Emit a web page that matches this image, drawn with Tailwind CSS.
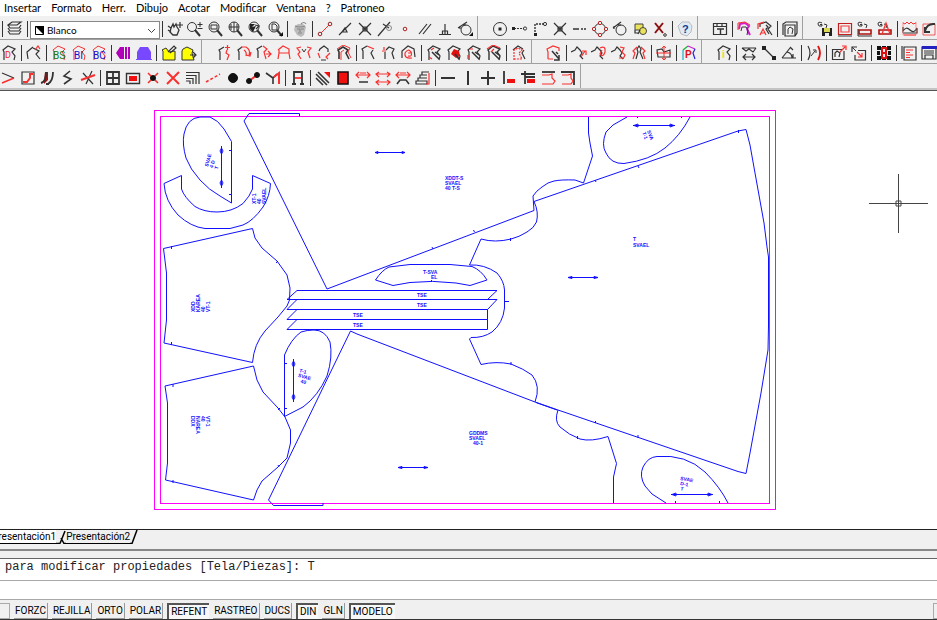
<!DOCTYPE html>
<html lang="es">

<head>
	<meta charset="UTF-8" />
	<meta name="viewport" content="width=device-width, initial-scale=1.0" />
	<title>Patroneo</title>
	<script src="https://cdn.jsdelivr.net/npm/@tailwindcss/browser@4"></script>
</head>

<body class="h-screen flex flex-col overflow-hidden bg-[#f0f0f0] text-black font-['Liberation_Sans',sans-serif]">
	<nav class="h-4 shrink-0 bg-white flex items-center gap-[10px] pl-1 text-[11px] leading-4 font-['Lato',sans-serif]">
		<button>Insertar</button>
		<button>Formato</button>
		<button>Herr.</button>
		<button>Dibujo</button>
		<button>Acotar</button>
		<button>Modificar</button>
		<button>Ventana</button>
		<button>?</button>
		<button>Patroneo</button>
	</nav>

	<header class="shrink-0 border-b border-[#555]">
		<div id="row-1" class="h-6 flex overflow-hidden">
			<div class="flex items-end shrink-0 border-b border-r border-[#a0a0a0] pr-[2px]">
				<div class="flex items-end" data-icons="| layers |"></div>
				<div class="h-[18px] w-[130px] flex items-center bg-white border border-[#888] pl-1">
					<svg class="w-[9px] h-[9px] shrink-0" viewBox="0 0 9 9" aria-hidden="true">
						<path d="M.5.5h8v8h-8z" fill="#fff" stroke="#000" />
						<path d="M0 0h9v9z" />
					</svg>
					<select aria-label="Color" class="flex-1 min-w-0 appearance-none outline-none pl-[3px] text-[10px] leading-4 font-['Lato',sans-serif]">
						<option>Blanco</option>
					</select>
					<svg class="w-[9px] h-[9px] mr-[3px] shrink-0" viewBox="0 0 9 9" fill="none" stroke="#444" aria-hidden="true">
						<path d="M1 3l3.500 3.500L8 3" />
					</svg>
				</div>
				<div class="flex items-end" data-icons="| pan zoomPm zoomWin zoomAll zoomPrev zoomPage | face | snapEnd snapMid snapInt snapExt snapNode snapPar snapPerp snapTan"></div>
			</div>
			<div class="band" data-icons="circle track corner cross dash quad tangent osnap noSnap | help"></div>
			<div class="band" data-icons="table | copyPiece gradePiece | windowPiece"></div>
			<div class="band" data-icons="saveG redRect markRect markA | waves curveBack"></div>
		</div>
		<div id="row-2" class="h-6 flex overflow-hidden">
			<div class="band" data-icons="pieceD | pieceArrow | pieceBS pieceBI pieceBC | purple violet | yellowPen yellowOut"></div>
			<div class="band" data-icons="addPoint turnCurve moveRight baseRed pinch splitPiece doublePiece | topRed pointRed spiral | hatch1 hatch2 hatch3 hatch4 | dotPiece"></div>
			<div class="band" data-icons="redHatch | zig1 zig2 zig3 zig4 | bodice | pieceP"></div>
			<div class="band" data-icons="pieceI | measure diag angle | mirror | boxOut boxIn | grid8 | report saveTable"></div>
		</div>
		<div id="row-3" class="h-6 flex overflow-hidden">
			<div class="band" data-icons="chevron redCorner fillCurve zigzag crossLine | window rectIn crossDot crossRed nested dashRed bigDot link wedge | letterA | stripes square horiz1 horiz2 horiz3 stack | minus vert plus cornerL cornerT flow1 flow2"></div>
		</div>
		<div class="h-[2px] bg-[#c4c4c4]"></div>
	</header>

	<main class="flex-1 min-h-0 bg-white">
		<svg class="w-full h-full" viewBox="0 91 937 438" role="img" aria-label="Marcada">
			<g fill="none" stroke="#ff00ff" stroke-width="1">
				<rect x="154.500" y="110.500" width="621" height="399" />
				<rect x="160.500" y="116.500" width="609" height="387" />
			</g>
			<g fill="none" stroke="#1010ff" stroke-width="1" stroke-linejoin="round">
				<!-- fronts and back -->
				<path d="M299.500 116.500V113.500H249L244 121L327 289L534 210.500L533 196Q536 191 542 187Q548 182 554 181Q561 179.500 575 180L583.500 183L592.500 156L590 143L588.500 133V117" />
				<path d="M534 201.500L738 131L746 129.500L750 145L755 173L764 223L767 247L768.500 257V326L768 350L761 393L750 453L746 473.500L738 471.500L558 410L535 402L357 334L350.500 331" />
				<path d="M534 201.500Q539 212 536.500 222Q534 228 527 232Q519 237 511 239Q495 243 481 239L469.500 265Q484 264 497 273Q504 281 504.500 290V308Q503 323 492 332Q483 338 471 337.500L469.500 339L481 364.500Q496 361 511 364Q524 369 532 375Q541 386 535 402" />
				<path d="M350.500 331L268.500 500L273.500 505.500H323V503" />
				<path d="M558 410Q554 421 560 427Q569 435 580 439Q591 442 608 436.500L616.500 463.500L613.500 477V503" />
				<path d="M536 402.500L557 410" />
				<!-- sleeves -->
				<path d="M163.500 248.500L252.500 228.500L255 238L262 248L277 261L287 275L290 288L289.500 300L287 306L278 317L265 331Q254 344 252.500 362.500L164 343L166.500 320V273Z" />
				<path d="M165 386L253.500 366L257 380L263 392L278 408L285 417L290.500 430V443L287 458L278 467L262 481L257 490L253.500 500L165.500 480L167.500 463V403Z" />
				<!-- pockets -->
				<path d="M231.500 141.500V203L220 196Q209 190 200 180Q190 169 186 158Q182 144 184 134Q187 118 200 117H210Q218 120 224 129Z" />
				<path d="M284.500 355Q291 339 301 332Q307 330 314 330Q325 330 330 342Q333 357 327 376Q318 396 303 407L284.500 416.500Z" />
				<path d="M627 117L613 125L606 132Q601 145 606 153Q611 164 624 163.500Q650 160 665 148Q680 136 690 117" />
				<path d="M666 503L652 494L645 486Q639 476 643 467Q648 457 657 456.500Q686 454 705 472Q720 487 728 503" />
				<!-- collars -->
				<path d="M164 183.500L181.500 175.500V189Q184 197 195 206.500Q204 212 217 212Q232 212 243 203.500Q250 196 252.500 189V175.500L270.500 183.500Q270 196 263 207Q253 221 243 225L230 228.500H205Q191 227 178 215Q165 201 164 183.500Z" />
				<path d="M375.500 280Q382 270 389 267L410 264.500H450L472 266.500Q481 270 487 280L470 285.500L456 283Q432 280 410 282.500L393 285.500Z" />
				<!-- strips -->
				<path d="M297 290.500H497L487.500 299.500H287Z" />
				<path d="M297 299.500H497L487.500 309.500H287Z" />
				<path d="M297 309.500H487.500V319.500H287Z" />
				<path d="M297 319.500H487.500V329.500H287Z" />
				<!-- grain arrows -->
				<path d="M221.500 146V188M220 151l1.500-3l1.500 3l-1.500 3zM220 183l1.500-3l1.500 3l-1.500 3z" />
				<path d="M293.500 359V402M292 364l1.500-3l1.500 3l-1.500 3zM292 397l1.500-3l1.500 3l-1.500 3z" />
				<path d="M633 125.500H675M634 125.500l4-1.500v3zM674 125.500l-4-1.500v3z" />
				<path d="M671 494.500H713M672 494.500l4-1.500v3zM712 494.500l-4-1.500v3z" />
				<path d="M375 152.500H405M375 152.500l3-1v2zM405 152.500l-3-1v2z" />
				<path d="M568 277.500H598M568 277.500l4-1v2zM598 277.500l-4-1v2z" />
				<path d="M398 467.500H428M398 467.500l4-1v2zM428 467.500l-4-1v2z" />
				<!-- notches -->
				<path d="M171.500 246v3M229 150.500h2M229 194.500h2M276 263l2-2M432 247l1 2M473.500 230l1 2M510.500 238v3M505 301.500h4M595 180l1 2M638 166l1 2M738.500 130v3M431.500 280v2M171.500 342v3M173 384v3M173 480v3M278 410l2-2M284 363.500h3M284 408.500h3M278 465l1 2M511 362v3M577.500 436v3M595.500 421v2M638 435v3M675.500 501v2M719.500 501v2M637.500 117v1M681.500 117v1" />
			</g>
			<!-- piece names -->
			<g class="font-['Liberation_Sans',sans-serif]" fill="#1010ff" font-size="5" font-weight="bold">
				<g transform="translate(195 312) rotate(-90)">
					<text>XDD</text><text y="5">KAREA</text><text y="10">40</text><text y="15">VT-1</text>
				</g>
				<g transform="translate(206 416) rotate(90)">
					<text>VT-1</text><text y="5">40</text><text y="10">NAREA</text><text y="15">DDX</text>
				</g>
				<g transform="translate(445 180)">
					<text>XDDT-S</text><text y="5">SVAEL</text><text y="10">40 T-S</text>
				</g>
				<g transform="translate(469 435)">
					<text>GDDMS</text><text y="5">SVAEL</text><text x="4" y="10">40-1</text>
				</g>
				<g transform="translate(633 241)">
					<text>T</text><text y="6">SVAEL</text>
				</g>
				<g transform="translate(208 167) rotate(-75)">
					<text>SVAE</text><text y="5">4 D</text><text y="10">T</text>
				</g>
				<g transform="translate(256 204) rotate(-90)">
					<text>XT-1</text><text y="5">40</text><text y="10">SVAEL</text>
				</g>
				<g transform="translate(299 372) rotate(15)">
					<text>T-1</text><text y="5">SVAE</text><text x="4" y="10">40</text>
				</g>
				<g transform="translate(647 131) rotate(70)">
					<text>SVA</text><text y="5">T-1</text>
				</g>
				<g transform="translate(680 480) rotate(10)">
					<text>SVAE</text><text x="1" y="5">D-1</text><text x="2" y="10">T</text>
				</g>
				<text x="423" y="274">T-SVA</text><text x="431" y="279">EL</text>
				<text x="417" y="297">TSE</text>
				<text x="417" y="307">TSE</text>
				<text x="353" y="317">TSE</text>
				<text x="353" y="327">TSE</text>
			</g>
			<!-- cursor -->
			<path d="M869 203.500H928M898.500 174V233M896 201h5v5h-5z" fill="none" stroke="#444" />
		</svg>
	</main>

	<div class="h-5 shrink-0 flex items-start border-t border-[#222] overflow-hidden font-['Roboto',sans-serif]">
		<button class="-ml-2 h-[14px] text-[10px] leading-[13px] bg-white border-b border-black">Presentación1</button>
		<svg class="w-[10px] h-[14px] shrink-0" viewBox="0 0 10 14" stroke="#000" stroke-width="1.500" aria-hidden="true">
			<path d="M4 13.500L9 1M0 13.500H4M5 8l3 5.500H10" fill="none" />
		</svg>
		<button class="h-[14px] text-[10px] leading-[13px] border-b border-black">Presentación2</button>
		<svg class="w-2 h-[14px] shrink-0" viewBox="0 0 8 14" stroke="#000" stroke-width="1.500" aria-hidden="true">
			<path d="M0 13.500H2L7 0" fill="none" />
		</svg>
	</div>

	<section class="shrink-0 border-t-2 border-[#888] font-['Liberation_Mono',monospace]">
		<div class="h-2 border-b border-[#666]"></div>
		<p class="h-[21px] bg-white pl-[5px] text-[12px] leading-4 whitespace-pre text-[#222]">para modificar propiedades [Tela/Piezas]: T</p>
		<input type="text" aria-label="Comando" class="block w-full h-[20px] bg-white border-y border-[#a8a8a8] px-1 text-[12px] outline-none" />
	</section>

	<footer id="status" class="h-5 shrink-0 flex items-end gap-1 border-b border-[#333] text-[10px] leading-[14px] font-['Roboto',sans-serif]">
		<span class="w-[10px] h-4 border-y border-r border-[#aaa]"></span>
		<button aria-pressed="false">FORZC</button>
		<button aria-pressed="false">REJILLA</button>
		<button aria-pressed="false">ORTO</button>
		<button aria-pressed="false">POLAR</button>
		<button aria-pressed="true">REFENT</button>
		<button aria-pressed="false">RASTREO</button>
		<button aria-pressed="false">DUCS</button>
		<button aria-pressed="true">DIN</button>
		<button aria-pressed="false">GLN</button>
		<button aria-pressed="true">MODELO</button>
		<span class="ml-auto w-1 h-4 border-y border-l border-[#aaa]"></span>
	</footer>

	<script>
		const s = (color, d, w = 1.2) => `<path d="${d}" fill="none" stroke="${color}" stroke-width="${w}"/>`
		const k = (d, w) => s('#333', d, w)
		const r = (d, w) => s('#f83030', d, w)
		const f = (color, d) => `<path d="${d}" fill="${color}"/>`
		const t = (color, text, x = 3, y = 12, size = 10) =>
			`<text x="${x}" y="${y}" fill="${color}" font-size="${size}" font-family="Roboto, sans-serif">${text}</text>`
		const o = (color, x, y, rad, fill = 'none') => `<circle cx="${x}" cy="${y}" r="${rad}" stroke="${color}" fill="${fill}"/>`

		const lens = k('M10 9l5 6', 2) + o('#333', 7, 6, 5)
		const left = 'M3 15V7L2 5L7 1'
		const right = 'L14 4L11 7L14 11L13 15'
		const piece = left + right
		const hatch = k('M6 7l7 7M9 7l4 3', 1.5)
		const zig = k('M0 7L4 5L6 2L9 5L11 8L9 11L12 14', 1.2)
		const tag = k('M5 2Q1 0 1 3T5 5V3.500H3M7 3l3 1l-1 3', 1)

		const icons = {
			layers: k('M1 4L5 1H14L10 4ZM1 4L3 7H12L14 4M1 7L3 10H12L14 7M1 10L3 13H12L14 10'),
			pan: k('M1 5l3 2l2-4l1 3l2-3l1 3M4 7L3 11L6 14H10L12 9L10 6M1 9l3 2', 1.3) + k('M13 1v6M10 4h6', 1.2),
			zoomPm: k('M8 9l5 6', 2) + o('#333', 5, 6, 4.5) + k('M13 1v5M10.500 3.500h5M10.500 7.500h5', 1),
			zoomWin: lens + k('M4 4h6v4H4z', 1),
			zoomAll: lens + k('M7 1v10M2 6h10M4 3v6M10 3v6', 1),
			zoomPrev: lens + f('#222', 'M3 3h5l-3 3l4-1l-3 6l-3-3z') + k('M8 4l4 1l-3 3'),
			zoomPage: lens + k('M5 3h3l2 2v4H5z', 1) + f('#111', 'M12 15h4v-4z'),
			face: f('#bbb', 'M3 5L6 3H11L14 6L12 14L9 16L5 14L2 9Z') + s('#888', 'M3 5Q8 7 13 5M5 8h3M9 8h3M6 12h4M8 8v3M9 3Q12 0 14 3', 1.2),
			snapEnd: r('M4 12L12 4', 1) + o('#922', 3, 13, 1.8) + o('#922', 13, 3, 1.8),
			snapMid: k('M2 14L14 2M5 11H10L8 7Z'),
			snapInt: k('M2 2L14 14M14 2L2 14M6 6h4v4H6z'),
			snapExt: k('M1 15L13 1M6 3L12 7') + o('#888', 12, 7, 2.5),
			snapNode: o('#a22', 8, 8, 1.8),
			snapPar: k('M2 13L10 3M6 13L14 3'),
			snapPerp: k('M8 3V13M2 13.500H14M5.500 13v-3h5v3'),
			snapTan: o('#333', 9, 9, 5) + k('M1 7L10 1M3 5v3M5 4h4') + f('#111', 'M12 15h4v-4z'),
			circle: o('#333', 8, 8, 6.5) + f('#222', 'M6.500 6.500h3v3h-3z'),
			track: '<path d="M2 7.500H12" stroke="#333" stroke-width="1.2" stroke-dasharray="2 1"/>' + f('#222', 'M0 6h3v3H0z') + o('#333', 13, 7.5, 1.6),
			corner: '<path d="M3 14V3H13" fill="none" stroke="#333" stroke-width="1.4" stroke-dasharray="2 1"/>' + f('#222', 'M2 12h3v3H2z') + o('#333', 13, 3, 1.6),
			cross: k('M2 2L14 14M14 2L2 14M6 6h4v4H6z'),
			dash: k('M1 8H7M9 8h2M12 8h2', 1.5),
			quad: o('#333', 8, 8, 5.5) + o('#b22', 8, 2, 1.7, '#f0f0f0') + o('#b22', 8, 14, 1.7, '#f0f0f0') + o('#b22', 2, 8, 1.7, '#f0f0f0') + o('#b22', 14, 8, 1.7, '#f0f0f0'),
			tangent: o('#333', 9, 9, 5) + k('M1 7L9 1M2 5v3M5 4h4'),
			osnap: '<path d="M3 3h8v6H3z" fill="#ece35c" stroke="#444"/>' + o('#444', 11, 10, 3.5, '#ece35c') + k('M6 13L8 9M3 9v3h4'),
			noSnap: s('#8b1010', 'M3 2L11 12M11 2L3 12', 2) + o('#333', 13, 14, 1.3),
			help: '<path d="M1 5L5 1H12L15 5L14 11L10 15L4 13Z" fill="#dfeaf5" stroke="#bbb"/>' + `<text x="5" y="12" fill="#123a8c" font-size="11" font-weight="bold" font-family="Liberation Sans">?</text>`,
			table: k('M1.500 2.500h13v11h-13zM1 5.500h14M5 2v3M10 2v3') + k('M5 8h7M8.500 8v5', 1.4),
			copyPiece: s('#d020d0', 'M2 8L3 3L8 2L12 5L10 8L13 14', 2) + k('M4 10L5 6L9 6L11 9L10 14', 1) + r('M1 9V2L8 1L13 4', 1),
			gradePiece: k('M3 6V3L9 1L14 5L11 8L15 14M9 4L11 6L9 8L12 13') + r('M1 8V3L7 1') + r('M3 14L6 8L9 14M4 12h4'),
			windowPiece: k('M3 4V15H13V4zM1 14V3L4 1H15V12L13 15') + k('M6 13V8L8 6L11 8L10 13', 1),
			saveG: tag + f('#222', 'M5 7h10v8H5z') + f('#d8d855', 'M7 7h6v4H7z') + f('#eee', 'M8 12h4v3H8z'),
			redRect: s('#c02020', 'M1.500 2.500h13v11h-13z', 1.2) + s('#f04040', 'M4 5h8v6H4z', 1.2) + k('M1 15h14', 1),
			markRect: tag + s('#b01010', 'M2 9h12v4H2z', 1.6) + k('M1 8v7h14', 1),
			markA: tag + s('#b01010', 'M2 9h12v4H2z', 1.6) + r('M5 13L9 2L13 13'),
			waves: r('M1 2l2 1l2-2l2 2l2-2l2 2l3-1M2 14h12', 1) + k('M1 6V10Q4 5 8 9T15 7V12H1') + s('#f55', 'M1 1v13h13V1', .6),
			curveBack: r('M1 3H13V14H1z', .8) + k('M3 10Q5 2 13 3M3 6v5h5', 2),

			pieceD: k(piece) + t('#e22', 'D', 4, 13, 9),
			pieceArrow: k('M2 14L1 7L7 2M7 3L13 6L10 9L14 14') + r('M9 5L12 1L14 4'),
			pieceBS: r(piece, 1) + t('#087a18', 'BS', 2, 14, 10),
			pieceBI: r(piece, 1) + t('#1111d0', 'BI', 3, 14, 10),
			pieceBC: r(piece, 1) + t('#1111d0', 'BC', 2, 14, 10),
			purple: f('#b000b8', 'M0 8L4 2H8V14H4ZM9 2h2v12H9zM12 2h2v12h-2z'),
			violet: f('#7848ff', 'M1 14V7L4 2H12L15 7V14ZM0 14h16v1H0z'),
			yellowPen: '<path d="M2 15V6L1 5L5 3L8 7L14 6V15Z" fill="#ff0" stroke="#333"/>' + k('M7 7L13 1L15 3L9 8'),
			yellowOut: '<path d="M1 15V6L2 4L6 2L12 5L11 8L13 15Z" fill="#ff0" stroke="#333"/>' + k('M9 10h5M12 7l3 3l-3 3'),
			addPoint: k('M4 15V7L3 5L8 2') + r('M9 2.500h5M11.500 0v5M11 5L10 8L13 10L11 15'),
			turnCurve: k('M3 15V7L2 5L6 2') + r('M5 2H10Q15 5 13 10M15 7l-1 4l-4-1M8 5Q11 7 10 11'),
			moveRight: k('M2 13V6L1 4L6 1') + r('M7 1L11 4L8 7L10 14M10 9h5M12 6l3 3l-3 3'),
			baseRed: r('M2 14L3 8H13L14 14M2 5L7 1L13 4V8H3V5'),
			pinch: r('M5 14L2 9L4 7L1 3L5 2M11 2L15 3L12 7L14 13') + k('M6 4L8 7L10 4', 1),
			splitPiece: k('M3 6L4 4L8 1L12 4V7M10 15H5') + r('M2 8L4 13M14 8L10 12L12 14'),
			doublePiece: k('M3 14V7L2 5L7 2L12 5L10 8L13 14', 1.6) + r('M5 15V7L8 5M1 4L7 0L14 3L12 7L15 13', 1),
			topRed: k('M2 14V6L1 4L6 1M12 5L10 8L13 14') + r('M6 1L13 4'),
			pointRed: k('M4 14V7M5 5L8 2L13 4L11 8L13 14') + r('M3 2v3M1 6h4'),
			spiral: k('M1 13V6L7 1L13 4L14 12') + r('M11 13Q3 14 4 8Q7 3 10 7Q12 12 7 11M7 8h4'),
			hatch1: k(piece) + hatch + r('M5 5l3-2M3 12l3 2'),
			hatch2: k(piece) + f('#e01010', 'M5 9L8 4L13 6L14 11L10 13Z') + k('M9 9l4 5', 1.8),
			hatch3: k(piece) + hatch + r('M2 10v4M4 4h3'),
			hatch4: k(piece, 1.4) + hatch + r('M1 4L7 0L14 3M5 7L8 4'),
			dotPiece: k('M13 5L11 8L14 14M2 5L7 1L12 4') + '<path d="M3 15V5L7 3L11 5L8 8L11 14H3" fill="none" stroke="#f83030" stroke-width="1.2" stroke-dasharray="2 1"/>',
			redHatch: r('M2 14V7L1 4L7 1L13 3V6M2 14H7') + k('M6 6l7 8M10 7l2 2M13 10v5H8', 1.5),
			zig1: zig + r('M10 12L14 6M11 6h4v4'),
			zig2: zig + r('M9 3Q15 0 14 7Q12 13 9 9L11 5'),
			zig3: zig + r('M9 2L13 3L11 7L14 10L12 14M8 13h4'),
			zig4: k('M5 14L7 7L6 4L8 1L10 4L9 7L12 14') + r('M2 14L4 8L2 6L6 2M14 14L12 8L14 6L10 2'),
			bodice: k('M2 12L1 5L6 4L8 7L14 5V12Z') + r('M8 1v14M0 8h15M6 3l2-2l2 2M6 13l2 2l2-2', 1),
			pieceP: s('#18b040', 'M2 5L7 1') + s('#d020d0', 'M7 1L14 4') + s('#20b0c0', 'M2 5V15') + s('#2222e0', 'M14 4L12 8L14 14') + `<text x="4" y="13" fill="#e01010" font-size="10" font-weight="bold" font-family="Liberation Sans">P</text>`,

			pieceI: k(piece) + `<text x="6" y="13" fill="#f0e000" font-size="11" font-weight="bold" font-family="Liberation Sans">i</text>`,
			measure: k('M1 3H15M1 3L5 6L8 4L12 7L15 3M2 12H14M5 9l-3 3l3 3M11 9l3 3l-3 3'),
			diag: k('M3 3L13 13') + f('#222', 'M1 1h4v4H1zM11 11h4v4h-4z'),
			angle: k('M1 13H15M1 13L9 3M6 7Q11 8 11 13M12 9v4M9 2l3 3'),
			mirror: k('M2 1Q6 8 2 15') + k('M5 11L9 6M7 5h3v3', 1) + s('#e01010', 'M12 1Q16 8 12 15', 1.8),
			boxOut: k('M1.500 4.500H11M1.500 4V14.500H13V6M4 12V8L6 6L9 8L8 12') + r('M9 7L14 2M11 1h4v4'),
			boxIn: k('M1 7V2H6M7 5.500H14.500V15H4V10') + r('M6 7L11 12M11 8v4H7') + k('M1 2l4 4', 1),
			grid8: f('#111', 'M1 1h4v4H1zM6 1h4v2H6zM11 1h4v4h-4zM1 6h3v4H1zM12 6h3v4h-3zM1 11h4v4H1zM6 13h4v2H6zM11 11h4v4h-4z') + s('#e01010', 'M6 3h4v10H6zM5 8h6', 2),
			report: k('M3 2h12v13H3zM1 1v13') + r('M5 5h7M5 7.500h4M5 10h7M5 12.500h4', 1),
			saveTable: k('M1 2h14v12H1z') + f('#2222c0', 'M1 1h15v3H1z') + k('M3 6h10M3 8h10M4 14v-4h8v4'),

			chevron: k('M2 3L14 8') + r('M14 8L2 13', 1.5),
			redCorner: k('M2 2h12v12H2z') + r('M3 12H7L10 8V4H13', 2),
			fillCurve: f('#a01010', 'M5 2h3v8L4 14V10z') + k('M1 13Q6 12 6 2M8 14Q13 11 13 2M6 14h3', 1.8),
			zigzag: k('M10 1L4 6L11 9L4 14', 1.6),
			crossLine: k('M3 3L13 14M12 1L6 14') + r('M1 10L15 5', 2),
			window: k('M2 2h12v12H2zM8 2v12M2 8h12', 1.8),
			rectIn: k('M1.500 3.500h13v10h-13z', 1.4) + f('#f01010', 'M4 6h8v5H4z'),
			crossDot: r('M3 3L13 13M13 3L3 13', 1.6) + o('#111', 8, 8, 2.5, '#111'),
			crossRed: r('M2 2L14 14M14 2L2 14', 2),
			nested: k('M1 2.500H14V14M1 5.500H11V14M1 8.500H8V14M1 11H5V14', 1.2),
			dashRed: '<path d="M1 12L15 4" stroke="#f83030" stroke-width="1.5" stroke-dasharray="3 2"/>',
			bigDot: o('#111', 8, 8, 4.5, '#111'),
			link: r('M4 11L12 5', 2) + o('#111', 4, 11, 2.5, '#111') + o('#111', 12, 5, 2.5, '#111'),
			wedge: k('M1 3L8 8V14M12 4L8 8', 1.6) + r('M9 7L14 3V14', 2),
			letterA: k('M4 14V2H12V14M2 14h4M10 14h4', 1.8) + r('M5 8h6', 1.8),
			stripes: k('M1 8L8 15M1 4L12 15M3 2L14 13', 1.6) + f('#f01010', 'M9 2h6v6z'),
			square: '<path d="M3 2h10v12H3z" fill="#f01010" stroke="#111" stroke-width="1.6"/>',
			horiz1: r('M1 5H15M4 2L1 5L4 8M12 2L15 5L12 8M5 3h6') + k('M4 12h9', 1.5),
			horiz2: r('M1 4H15M4 2L1 4L4 7M12 2L15 4L12 7M1 12H15M4 10L1 12L4 15M12 10L15 12L12 15'),
			horiz3: r('M1 5H15M4 2L1 5L4 8M12 2L15 5L12 8M5 3h6') + k('M2 14L5 10H11L14 14', 1.6),
			stack: k('M1 14V11H12V14ZM3 11V8H12M5 8V5H12M7 5V2H14', 1.2) + r('M14 3v11H11'),
			minus: k('M1 8H15', 2),
			vert: k('M8 1V15', 2),
			plus: k('M8 1V15M1 8H15', 2),
			cornerL: k('M4 1V14', 1.8) + f('#f01010', 'M7 9h8v4H7z'),
			cornerT: k('M1 4H15M5 1V14M5 7h10', 1.8) + f('#f01010', 'M7 9h8v4H7z'),
			flow1: k('M2 2H15', 1.8) + r('M2 5H9L12 4V8L15 11L13 14H2'),
			flow2: k('M1 2H14V15', 1.8) + r('M2 5H8L11 4V8L13 11L11 14H2'),
		}

		document.querySelectorAll('.band').forEach(band => {
			band.className = 'flex items-end shrink-0 border-b border-r border-[#a0a0a0] pr-[2px] pl-3'
		})
		document.querySelector('#row-2 > div').className = 'flex items-end shrink-0 border-b border-r border-[#a0a0a0] pr-[2px] -ml-px'
		document.querySelector('#row-3 > div').className = 'flex items-end shrink-0 border-r border-[#a0a0a0] pr-[2px] -ml-[2px]'

		document.querySelectorAll('[data-icons]').forEach(bar => {
			bar.innerHTML = bar.dataset.icons.split(' ').map(name => name === '|'
				? '<span class="w-[5px] h-5 flex justify-center items-center shrink-0"><span class="w-px h-4 bg-[#333]"></span></span>'
				: `<button aria-label="${name}" class="w-5 h-5 flex justify-center items-center shrink-0"><svg class="w-4 h-4" viewBox="0 0 16 16">${icons[name]}</svg></button>`
			).join('')
		})

		document.querySelectorAll('#status button').forEach(b => {
			b.className = b.getAttribute('aria-pressed') === 'true'
				? 'h-4 px-[2px] border-t-2 border-l-2 border-[#555] bg-[#f8f8f8]'
				: 'h-4 px-px border-b border-r border-[#999]'
		})
	</script>
</body>

</html>
